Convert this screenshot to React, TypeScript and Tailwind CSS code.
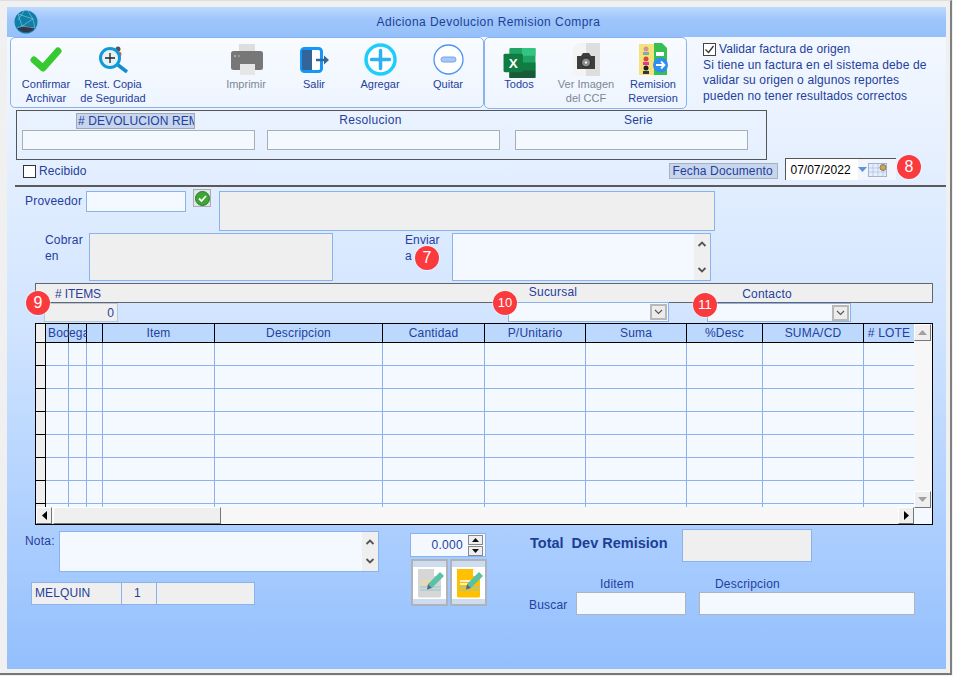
import type { ReactNode } from "react";

const columns = [
  { label: "", width: "w-[10px]" },
  { label: "Bod", width: "w-[23px]" },
  { label: "ega", width: "w-[18px]" },
  { label: "", width: "w-[16px]" },
  { label: "Item", width: "w-[112px]" },
  { label: "Descripcion", width: "w-[168px]" },
  { label: "Cantidad", width: "w-[102px]" },
  { label: "P/Unitario", width: "w-[101px]" },
  { label: "Suma", width: "w-[101px]" },
  { label: "%Desc", width: "w-[76px]" },
  { label: "SUMA/CD", width: "w-[101px]" },
  { label: "# LOTE", width: "w-[51px]" },
];

const rows = [0, 1, 2, 3, 4, 5, 6, 7];

function ToolButton({ icon, lines, disabled }: { icon: ReactNode; lines: string[]; disabled?: boolean }) {
  return (
    <div className={`flex h-[70px] w-[66px] shrink-0 flex-col items-center text-[11px] leading-[14px] ${disabled ? "text-[#7c8796]" : ""}`}>
      <div className="flex h-[38px] items-end justify-center">{icon}</div>
      <div className="mt-[1px] whitespace-nowrap text-center">
        {lines.map((l) => (
          <div key={l}>{l}</div>
        ))}
      </div>
    </div>
  );
}

function Badge({ n, className }: { n: string; className: string }) {
  return (
    <div className={`absolute flex h-[24px] w-[24px] items-center justify-center rounded-full bg-[#fb3a3d] text-white ring-1 ring-white/40 ${className}`}>
      {n}
    </div>
  );
}

function Chevron({ up }: { up?: boolean }) {
  return (
    <svg width="10" height="8" viewBox="0 0 10 8">
      <path d={up ? "M1.5 6 5 2.5 8.5 6" : "M1.5 2 5 5.5 8.5 2"} fill="none" stroke="#555" strokeWidth="1.8" />
    </svg>
  );
}

function TextScroll() {
  return (
    <div className="flex w-[16px] flex-col items-center justify-between bg-[#efefef] py-[6px]">
      <Chevron up />
      <Chevron />
    </div>
  );
}

function SelectArrow() {
  return (
    <div className="flex h-[16px] w-[17px] items-center justify-center border-2 border-[#b8b8b8] bg-[#ececec]">
      <svg width="9" height="6" viewBox="0 0 9 6">
        <path d="M1 1 4.5 4.5 8 1" fill="none" stroke="#555" strokeWidth="1.1" />
      </svg>
    </div>
  );
}

function BevelButton({ className, children }: { className: string; children: ReactNode }) {
  return (
    <div className={`flex items-center justify-center border border-t-white border-l-white border-r-[#777] border-b-[#777] bg-[#efefef] ${className}`}>
      {children}
    </div>
  );
}

function DocButton({ fill, line }: { fill: string; line: string }) {
  return (
    <div className="flex h-[47px] w-[37px] items-center justify-center border-2 border-[#adb3bb] bg-[#cfdcee]">
      <svg width="33" height="32" viewBox="0 0 33 32">
        <rect width="33" height="32" fill="#fff" />
        <path d="M5 2h16l7 7v20a1.500 1.500 0 0 1-1.500 1.500h-20a1.500 1.500 0 0 1-1.500-1.500z" fill={fill} />
        <path d="M21 2v7h7z" fill="#fff" />
        <path d="M8 14h12M8 17h12" stroke={line} strokeWidth="1.500" />
        <path d="M7 20h21M7 23h21" stroke="#8ec7d6" strokeWidth="1.200" />
        <path d="M15 17 27 5l4 4-12 12z" fill="#58c2a8" />
        <path d="M15 17l4 4-5 1.500z" fill="#566878" />
      </svg>
    </div>
  );
}

export default function App() {
  return (
    <div className="h-[676px] w-[953px] overflow-hidden bg-[#f0f0f0] font-['Liberation_Sans',Arial,sans-serif] text-[12px] text-[#24409c]">
      <div className="h-[675px] w-[952px] border-r-2 border-b-2 border-t border-t-[#dedede] border-r-[#808080] border-b-[#777] pt-[6px] pl-[7px]">
        <div className="relative h-[662px] w-[939px] bg-gradient-to-b from-[#f7faff] via-[#cfe3ff] to-[#93bffd]">
          {/* title bar */}
          <div className="relative flex h-[30px] items-center justify-center bg-gradient-to-b from-[#bddafe] via-[#9fc6fb] via-40% to-[#94c0fa] pl-[24px] tracking-[0.45px] text-[#1f3f96]">
            Adiciona Devolucion Remision Compra
            <svg className="absolute top-[3px] left-[7px]" width="24" height="24" viewBox="0 0 24 24">
              <circle cx="12" cy="12" r="11.500" fill="#0d7fa8" />
              <path d="M3 18a11.500 11.500 0 0 0 18 0l-7-2z" fill="#2e3a4c" />
              <path d="M4 4 8 16 21 18M4 4 19 9 8 16M19 9 14 1M8 16 3 18M19 9 21 18M10 1 4 10" fill="none" stroke="#b5d3e2" strokeWidth="0.500" />
            </svg>
          </div>

          {/* toolbar and origin note */}
          <div className="flex h-[73px] pl-[3px]">
            <div className="flex h-[71px] w-[474px] rounded-[5px] border border-[#8ab2ec] bg-gradient-to-b from-[#f8fbff] to-[#eef5ff] pl-[2px]">
              <ToolButton
                lines={["Confirmar", "Archivar"]}
                icon={
                  <svg className="mb-[3px]" width="34" height="26" viewBox="0 0 34 26">
                    <path d="M5 13 14 21 29 4" fill="none" stroke="#36ca30" strokeWidth="7" strokeLinecap="round" strokeLinejoin="round" />
                  </svg>
                }
              />
              <div className="w-[1px] shrink-0" />
              <ToolButton
                lines={["Rest. Copia", "de Seguridad"]}
                icon={
                  <svg className="mb-[3px] ml-[1px]" width="32" height="28" viewBox="0 0 32 28">
                    <circle cx="20" cy="4" r="2.500" fill="#555" />
                    <circle cx="21" cy="9" r="2.500" fill="#ef5a5a" />
                    <circle cx="12" cy="13" r="9.500" fill="#e6f1f6" stroke="#0f9ad6" strokeWidth="3" />
                    <path d="M7 13h10M12 8v10" stroke="#222" strokeWidth="1.300" />
                    <path d="M20 20 29 27" stroke="#0f8fd2" strokeWidth="3.500" />
                  </svg>
                }
              />
              <div className="w-[67px] shrink-0" />
              <ToolButton
                disabled
                lines={["Imprimir"]}
                icon={
                  <svg className="mb-[1px] ml-[1px]" width="32" height="31" viewBox="0 0 32 31">
                    <rect x="8" y="0" width="16" height="8" fill="#dedede" />
                    <rect x="0" y="7" width="32" height="19" rx="2.500" fill="#777" />
                    <circle cx="4" cy="12" r="1.200" fill="#aaa" />
                    <circle cx="8" cy="12" r="1.200" fill="#999" />
                    <rect x="9" y="20" width="15" height="11" fill="#e6e6e6" />
                  </svg>
                }
              />
              <div className="w-[2px] shrink-0" />
              <ToolButton
                lines={["Salir"]}
                icon={
                  <svg className="mb-[3px] ml-[1px]" width="30" height="26" viewBox="0 0 30 26">
                    <rect x="1.500" y="1.500" width="20" height="23" rx="3" fill="#fff" stroke="#1497f6" strokeWidth="3" />
                    <path d="M2 3h10v20H2z" fill="#33659b" />
                    <path d="M16 13h9" stroke="#33659b" strokeWidth="2.500" />
                    <path d="M24 8.500 29 13l-5 4.500z" fill="#33659b" />
                  </svg>
                }
              />
              <ToolButton
                lines={["Agregar"]}
                icon={
                  <svg className="ml-[1px]" width="33" height="33" viewBox="0 0 33 33">
                    <circle cx="16.500" cy="16.500" r="14.500" fill="#fff" stroke="#1fcdfa" strokeWidth="3.500" />
                    <path d="M7.500 16.500h18M16.500 7.500v18" stroke="#2eb0f2" strokeWidth="3.500" strokeLinecap="round" />
                  </svg>
                }
              />
              <div className="w-[2px] shrink-0" />
              <ToolButton
                lines={["Quitar"]}
                icon={
                  <svg className="mb-[1px]" width="31" height="31" viewBox="0 0 31 31">
                    <circle cx="15.500" cy="15.500" r="14.500" fill="#fff" stroke="#4b92f6" strokeWidth="1.300" />
                    <rect x="8" y="13" width="15" height="5" rx="2.500" fill="#a9c8f6" stroke="#6ea2ef" />
                  </svg>
                }
              />
            </div>
            <div className="flex h-[72px] w-[203px] gap-[1px] rounded-[5px] border border-[#8ab2ec] bg-gradient-to-b from-[#f8fbff] to-[#eef5ff] pl-[1px]">
              <ToolButton
                lines={["Todos"]}
                icon={
                  <svg className="-mb-[2px]" width="33" height="30" viewBox="0 0 33 31">
                    <rect x="6" y="0" width="27" height="31" rx="1.500" fill="#21a366" />
                    <rect x="19" y="0" width="14" height="8" fill="#33c481" />
                    <rect x="19" y="15" width="14" height="8" fill="#107c41" />
                    <rect x="6" y="23" width="27" height="8" fill="#185c37" />
                    <rect x="0" y="6" width="20" height="19" rx="1.500" fill="#107c41" />
                    <text x="10" y="20.500" textAnchor="middle" fontSize="14" fontWeight="700" fill="#fff" fontFamily="Liberation Sans">
                      X
                    </text>
                  </svg>
                }
              />
              <ToolButton
                disabled
                lines={["Ver Imagen", "del CCF"]}
                icon={
                  <svg width="27" height="33" viewBox="0 0 27 33">
                    <path d="M0 5 5 0h8v33H0z" fill="#f4f4f4" />
                    <rect x="13" y="0" width="14" height="33" fill="#dedede" />
                    <path d="M4 13h4l2-3h6l2 3h4v13H4z" fill="#3d3d3d" />
                    <circle cx="13" cy="19.500" r="4.500" fill="#8d8d8d" stroke="#222" />
                    <circle cx="13" cy="19.500" r="1.200" fill="#eee" />
                  </svg>
                }
              />
              <ToolButton
                lines={["Remision", "Reversion"]}
                icon={
                  <svg width="29" height="33" viewBox="0 0 29 33">
                    <rect x="0" y="1" width="15" height="31" fill="#f6e27a" />
                    <path d="M15 0h8l5 5v27H15z" fill="#37bf52" />
                    <path d="M17 9h8v4h-8zM17 19h5v4h-5z" fill="#fff" />
                    <circle cx="7" cy="6" r="2.500" fill="#c99" />
                    <rect x="4" y="9" width="6" height="3" fill="#8aa" />
                    <circle cx="7" cy="16" r="2.500" fill="#d34b3e" />
                    <rect x="4" y="19" width="6" height="3" fill="#e39" />
                    <circle cx="7" cy="25" r="2.500" fill="#222" />
                    <rect x="4" y="28" width="6" height="3" fill="#334" />
                    <circle cx="21.500" cy="22" r="7.500" fill="#2f8cf0" />
                    <path d="M17 22h8M22 18.500 25.500 22 22 25.500" fill="none" stroke="#fff" strokeWidth="1.800" />
                  </svg>
                }
              />
            </div>
            <div className="ml-[16px] pt-[5px] text-[12px] leading-[15.300px] tracking-[0.15px] whitespace-nowrap">
              <div className="flex h-[15px] items-center gap-[3px] tracking-[0.05px]">
                <div className="flex h-[13px] w-[13px] items-center justify-center border border-[#444] bg-white">
                  <svg width="11" height="11" viewBox="0 0 11 11">
                    <path d="M1.500 5.500 4.500 8.500 9.500 2" fill="none" stroke="#333" strokeWidth="1.300" />
                  </svg>
                </div>
                Validar factura de origen
              </div>
              <div className="mt-[1px]">Si tiene un factura en el sistema debe de</div>
              <div>validar su origen o algunos reportes</div>
              <div>pueden no tener resultados correctos</div>
            </div>
          </div>

          {/* document number group */}
          <div className="ml-[9px] flex h-[50px] w-[751px] gap-[12px] border border-[#555] px-[5px]">
            <div className="w-[233px]">
              <div className="mt-[2px] ml-[54px] h-[16px] w-[119px] overflow-hidden border border-[#9fa8b5] bg-[#c7d6ec] pl-[1px] leading-[14px] tracking-[0.1px] whitespace-nowrap">
                # DEVOLUCION REM
              </div>
              <div className="mt-[1px] h-[20px] border border-[#a9aeb5] bg-[#f4f8ff]" />
            </div>
            <div className="w-[233px]">
              <div className="h-[19px] pt-[2px] pr-[26px] text-center leading-[14px] tracking-[0.3px]">Resolucion</div>
              <div className="h-[20px] border border-[#a9aeb5] bg-[#f4f8ff]" />
            </div>
            <div className="ml-[3px] w-[233px]">
              <div className="h-[19px] pt-[2px] pl-[14px] text-center leading-[14px] tracking-[0.2px]">Serie</div>
              <div className="h-[20px] border border-[#a9aeb5] bg-[#f4f8ff]" />
            </div>
          </div>

          {/* received and date */}
          <div className="-mt-[2px] flex h-[22px]">
            <div className="mt-[6px] ml-[16px] flex h-[14px] items-center gap-[3px] tracking-[0.1px]">
              <div className="h-[13px] w-[13px] border border-[#333] bg-white" />
              Recibido
            </div>
            <div className="mt-[5px] ml-[582px] h-[16px] w-[109px] border border-[#a9b1bc] bg-[#c7d6ec] pl-[3px] leading-[15px] tracking-[0.15px] whitespace-nowrap">
              Fecha Documento
            </div>
            <div className="ml-[7px] flex h-[22px] w-[111px] items-center border-t border-l border-[#555] bg-[#fff]">
              <span className="pl-[5px] text-black">07/07/2022</span>
              <div className="ml-[7px] flex h-[21px] flex-1 items-center bg-[#f2f6fc]">
                <svg width="30" height="14" viewBox="0 0 30 14">
                  <path d="M0 4h9L4.500 9z" fill="#5a94dc" />
                  <rect x="10.500" y="0.500" width="18" height="13" fill="#e6eefb" stroke="#9db4d6" />
                  <path d="M10 5h19M10 9h19M15 0v14M20 0v14M25 0v14" stroke="#a9bfdf" strokeWidth="0.700" />
                  <circle cx="25" cy="4.500" r="3" fill="#c8a85a" stroke="#8b7b4a" />
                </svg>
              </div>
            </div>
          </div>

          <div className="mt-[5px] ml-[8px] h-[2px] bg-[#5a5a5a]" />

          {/* supplier */}
          <div className="flex h-[46px]">
            <div className="mt-[5px] ml-[18px] w-[61px] tracking-[0.2px]">Proveedor</div>
            <div className="mt-[4px] h-[21px] w-[100px] border border-[#8ab2ec] bg-[#f4f8ff]" />
            <div className="mt-[2px] ml-[7px] flex h-[18px] w-[18px] items-center justify-center border border-[#adadad] bg-[#dfe5ea]">
              <svg width="15" height="15" viewBox="0 0 15 15">
                <circle cx="7.500" cy="7.500" r="7" fill="#3fa535" stroke="#1f7f2a" />
                <path d="M4 7.500 6.500 10 11 5" fill="none" stroke="#fff" strokeWidth="1.800" />
              </svg>
            </div>
            <div className="mt-[4px] ml-[8px] h-[40px] w-[496px] border border-[#8ab2ec] bg-[#efefef]" />
          </div>

          <div className="flex h-[50px]">
            <div className="ml-[38px] w-[44px] leading-[15.500px] tracking-[0.2px]">
              Cobrar
              <br />
              en
            </div>
            <div className="h-[48px] w-[244px] border border-[#8ab2ec] bg-[#efefef]" />
            <div className="ml-[72px] w-[47px] leading-[15.500px] tracking-[0.1px]">
              Enviar
              <br />a
            </div>
            <div className="flex h-[48px] w-[259px] justify-end border border-[#8ab2ec] bg-[#f4f8ff]">
              <TextScroll />
            </div>
          </div>

          {/* item header */}
          <div className="ml-[28px] flex h-[20px] w-[898px] items-center border border-[#666] bg-[#efefef] pl-[19px] tracking-[0.2px]">
            <span className="w-[418px] translate-y-[1px] tracking-[-0.1px] whitespace-nowrap">
              # ITEMS
            </span>
            <span className="w-[160px] -translate-y-[1px] text-center">Sucursal</span>
            <span className="ml-[54px] w-[160px] translate-y-[1px] text-center">Contacto</span>
          </div>
          <div className="flex h-[20px]">
            <div className="ml-[37px] h-[19px] w-[74px] border border-[#b3c6e2] bg-[#efefef] pr-[3px] text-right leading-[18px]">0</div>
            <div className="ml-[390px] flex h-[20px] w-[161px] -translate-y-[1px] items-center justify-end border border-[#8ab2ec] bg-[#f4f8ff] pr-[1px]">
              <SelectArrow />
            </div>
            <div className="ml-[38px] flex h-[19px] w-[144px] items-center justify-end border border-[#8ab2ec] bg-[#f4f8ff] pr-[1px]">
              <SelectArrow />
            </div>
          </div>

          {/* grid */}
          <div className="relative ml-[28px] h-[202px] w-[898px] border border-black bg-[#f4f8ff]">
            <div className="flex h-[19px] w-[879px] border-b border-black tracking-[0.2px]">
              {columns.map((c, i) => (
                <div
                  key={i}
                  className={`${c.width} shrink-0 border-r border-black leading-[18px] whitespace-nowrap ${i === 0 ? "bg-[#efefef]" : "bg-[#bcd8fc]"} ${i === 1 ? "pl-[2px] text-left" : i === 2 ? "text-left" : "text-center"}`}
                >
                  {c.label}
                </div>
              ))}
            </div>
            {rows.map((r) => (
              <div key={r} className={`flex w-[878px] ${r === 7 ? "h-[4px]" : "h-[23px]"}`}>
                {columns.map((c, i) => (
                  <div
                    key={i}
                    className={`${c.width} shrink-0 ${r === 7 ? "" : "border-b"} ${i === 0 ? "border-r border-black bg-[#efefef]" : "border-r border-[#8ab2ec]"}`}
                  />
                ))}
              </div>
            ))}

            {/* scrollbars sit over the grid body */}
            <div className="absolute top-0 right-0 flex h-[184px] w-[18px] flex-col justify-between bg-[#f7f7f7]">
              <BevelButton className="h-[17px] w-[17px]">
                <svg width="9" height="5" viewBox="0 0 9 5">
                  <path d="M0 5 4.500 0 9 5z" fill="#a0a0a0" />
                </svg>
              </BevelButton>
              <BevelButton className="h-[17px] w-[17px]">
                <svg width="9" height="5" viewBox="0 0 9 5">
                  <path d="M0 0 4.500 5 9 0z" fill="#a0a0a0" />
                </svg>
              </BevelButton>
            </div>
            <div className="absolute bottom-0 left-0 flex h-[17px] w-[878px] bg-[#f7f7f7]">
              <BevelButton className="h-[17px] w-[16px]">
                <svg width="5" height="9" viewBox="0 0 5 9">
                  <path d="M5 0 0 4.500 5 9z" fill="#000" />
                </svg>
              </BevelButton>
              <div className="ml-[1px] h-[17px] w-[168px] border border-t-white border-l-white border-r-[#777] border-b-[#777] bg-[#efefef]" />
              <div className="flex-1" />
              <BevelButton className="h-[17px] w-[16px]">
                <svg width="5" height="9" viewBox="0 0 5 9">
                  <path d="M0 0 5 4.500 0 9z" fill="#000" />
                </svg>
              </BevelButton>
            </div>
          </div>

          {/* bottom area */}
          <div className="flex">
            <div className="w-[372px]">
              <div className="mt-[6px] flex">
                <div className="ml-[18px] w-[34px] pt-[1px] tracking-[0.2px]">Nota:</div>
                <div className="flex h-[41px] w-[320px] justify-end border border-[#8ab2ec] bg-[#f4f8ff]">
                  <TextScroll />
                </div>
              </div>
              <div className="mt-[10px] ml-[24px] flex h-[23px] w-[224px]">
                <div className="w-[91px] border border-[#8ab2ec] bg-[#efefef] pl-[3px] leading-[20px] tracking-[0.1px]">MELQUIN</div>
                <div className="w-[35px] border-y border-r border-[#8ab2ec] bg-[#efefef] pl-[12px] leading-[20px]">1</div>
                <div className="w-[98px] border-y border-r border-[#8ab2ec] bg-[#efefef]" />
              </div>
            </div>
            <div className="ml-[31px] w-[77px]">
              <div className="mt-[8px] flex h-[24px] w-[76px] items-center justify-end border border-[#8ab2ec] bg-[#f4f8ff] pr-[2px] tracking-[0.3px]">
                0.000
                <div className="ml-[5px] flex flex-col">
                  <div className="flex h-[10px] w-[15px] items-center justify-center border border-[#888] bg-[#efefef]">
                    <svg width="7" height="4" viewBox="0 0 7 4">
                      <path d="M0 4 3.500 0 7 4z" fill="#111" />
                    </svg>
                  </div>
                  <div className="mt-px flex h-[10px] w-[15px] items-center justify-center border border-[#888] bg-[#efefef]">
                    <svg width="7" height="4" viewBox="0 0 7 4">
                      <path d="M0 0 3.500 4 7 0z" fill="#111" />
                    </svg>
                  </div>
                </div>
              </div>
              <div className="mt-[2px] ml-[1px] flex gap-[2px]">
                <DocButton fill="#d6d6d6" line="#f5dc95" />
                <DocButton fill="#ffc000" line="#fff" />
              </div>
            </div>
            <div className="ml-[42px]">
              <div className="mt-[4px] ml-[1px] flex h-[33px]">
                <div className="w-[152px] pt-[6px] text-[14.500px] leading-[17px] font-bold whitespace-pre text-[#1c3f95]">Total  Dev Remision</div>
                <div className="h-[33px] w-[130px] border border-[#8ab2ec] bg-[#efefef]" />
              </div>
              <div className="mt-[15px] flex h-[15px]">
                <div className="ml-[47px] w-[110px] pl-[24px] leading-[15px] tracking-[0.2px]">Iditem</div>
                <div className="ml-[13px] pl-[16px] leading-[15px] tracking-[0.2px]">Descripcion</div>
              </div>
              <div className="flex h-[23px]">
                <div className="w-[47px] pt-[4px] tracking-[0.2px]">Buscar</div>
                <div className="h-[23px] w-[110px] border border-[#b0b4ba] bg-[#f4f8ff]" />
                <div className="ml-[13px] h-[23px] w-[216px] border border-[#b0b4ba] bg-[#f4f8ff]" />
              </div>
            </div>
          </div>

          <Badge n="7" className="top-[239px] left-[408px] text-[16px]" />
          <Badge n="8" className="top-[148px] left-[890px] text-[16px]" />
          <Badge n="9" className="top-[284px] left-[19px] text-[16px]" />
          <Badge n="10" className="top-[284px] left-[486px] text-[13px]" />
          <Badge n="11" className="top-[286px] left-[686px] text-[13px]" />
        </div>
      </div>
    </div>
  );
}
